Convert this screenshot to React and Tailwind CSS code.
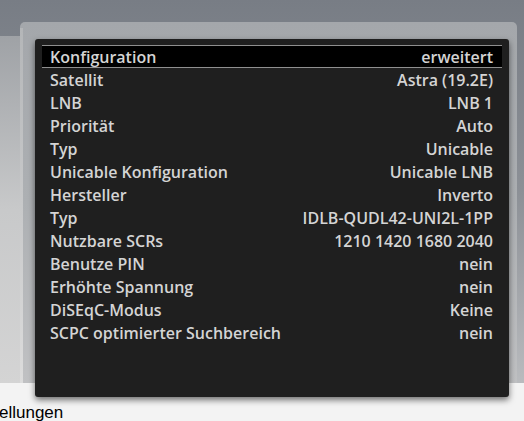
const rows = [
  ["Konfiguration", "erweitert"],
  ["Satellit", "Astra (19.2E)"],
  ["LNB", "LNB 1"],
  ["Priorität", "Auto"],
  ["Typ", "Unicable"],
  ["Unicable Konfiguration", "Unicable LNB"],
  ["Hersteller", "Inverto"],
  ["Typ", "IDLB-QUDL42-UNI2L-1PP"],
  ["Nutzbare SCRs", "1210 1420 1680 2040"],
  ["Benutze PIN", "nein"],
  ["Erhöhte Spannung", "nein"],
  ["DiSEqC-Modus", "Keine"],
  ["SCPC optimierter Suchbereich", "nein"],
];

export default function App() {
  return (
    <div
      className="w-[524px] h-[421px] overflow-hidden flex flex-col bg-[#f3f3f3]"
      style={{ fontFamily: '"Open Sans", "DejaVu Sans", sans-serif' }}
    >
      <div className="flex h-[383px] shrink-0 pt-[22px] bg-linear-to-b from-[#787d85] via-[#8c9096] to-[#b9bbbe]">
        {/* left sheen outside the panel */}
        <div className="w-[20px] mt-[14px] bg-linear-to-b from-[#9fa2a6] via-[#c8c9ca] to-[#d4d4d4]" />
        {/* light frame */}
        <div className="w-[497px] rounded-t-[5px] bg-linear-to-b from-[#a4a7ab] via-[#adb0b3] to-[#c0c1c3] flex pl-[15px] pt-[17px]">
          <div className="w-[3px] -ml-[15px] mr-[12px] -mt-[11px] bg-linear-to-b from-[#b4b6b8] to-[#dcdcdc]" />
          <div className="w-[474px] h-[358px] shrink-0 bg-[#1f1f1f] rounded-[3px] shadow-[0_3px_6px_rgba(0,0,0,0.55)] px-[7px] pt-[6px] z-10">
            {rows.map(([label, value], idx) => (
              <div
                key={idx}
                className={`h-[23px] flex items-center justify-between pl-[8px] pr-[9px] text-[16px] font-semibold text-[#d4d4d4] leading-none ${
                  idx === 0 ? "bg-black border-y border-[#8f8f8f]" : ""
                }`}
              >
                <span>{label}</span>
                <span>{value}</span>
              </div>
            ))}
          </div>
        </div>
      </div>
      <div className="mt-[21px] -ml-[1px] text-[17px] text-black leading-none" style={{ fontFamily: '"Liberation Sans", Arial, sans-serif' }}>
        ellungen
      </div>
    </div>
  );
}
